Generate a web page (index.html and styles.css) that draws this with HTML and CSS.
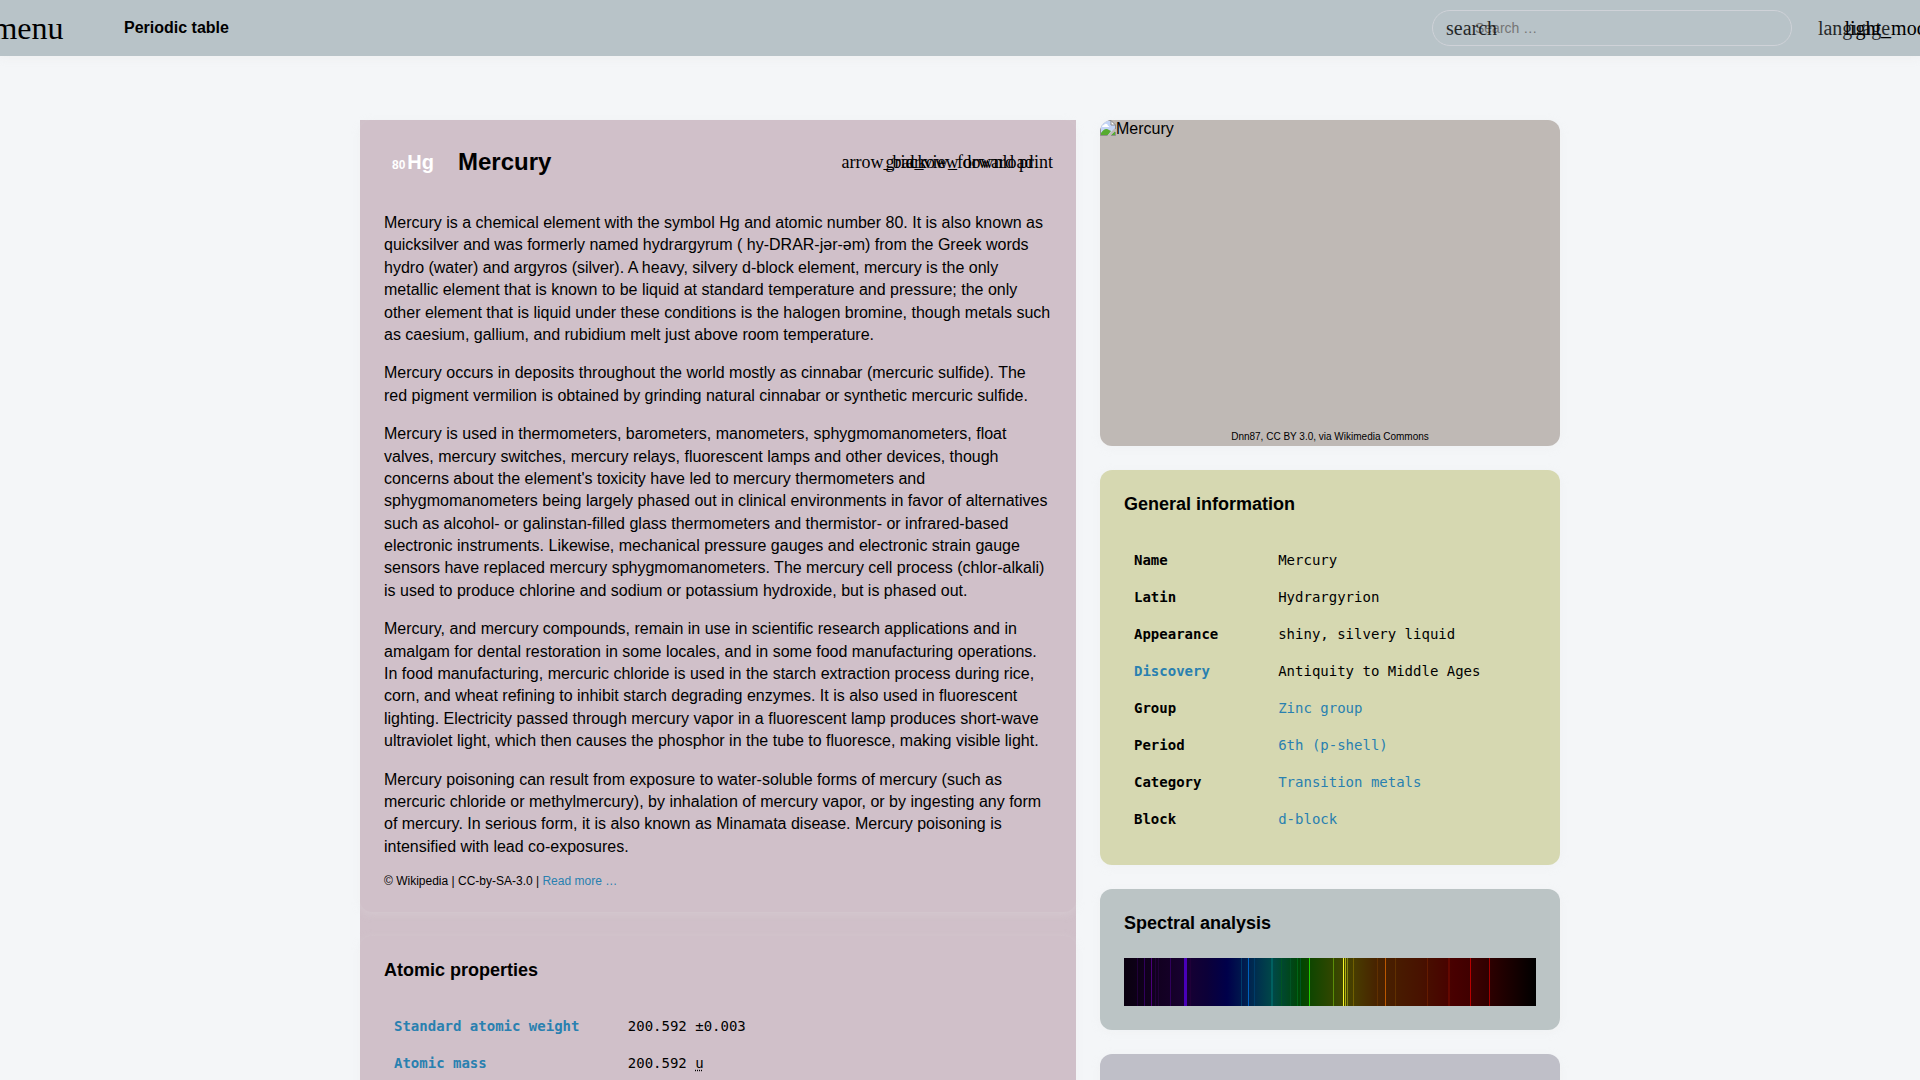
FILE: index.html
```html
<!DOCTYPE html>
<html lang="en">
<head>
<meta charset="utf-8">
<meta name="viewport" content="width=device-width, initial-scale=1">
<title>Mercury - Periodic table</title>
<link rel="stylesheet" href="styles.css">
</head>
<body>
<header class="topbar">
  <button class="icon-btn icon-btn-menu" type="button">menu</button>
  <a class="brand" href="#">Periodic table</a>
  <form class="search">
    <label class="search-icon" for="q">search</label>
    <input class="search-input" id="q" type="search" placeholder="Search …">
  </form>
  <div class="topbar-actions">
    <button class="icon-btn icon-btn-soft" type="button">language</button>
    <button class="icon-btn" type="button">light_mode</button>
  </div>
</header>

<main class="layout">
  <article class="column">
    <section class="panel">
      <div class="panel-head">
        <span class="symbol"><small class="number">80</small>Hg</span>
        <h1 class="title">Mercury</h1>
        <nav class="tools">
          <a class="tool" href="#prev">arrow_back</a>
          <a class="tool" href="#table">grid_view</a>
          <a class="tool" href="#next">arrow_forward</a>
          <a class="tool" href="#download">download</a>
          <a class="tool" href="#print">print</a>
        </nav>
      </div>
      <div class="prose">
        <p>Mercury is a chemical element with the symbol Hg and atomic number 80. It is also known as quicksilver and was formerly named hydrargyrum ( hy-DRAR-jər-əm) from the Greek words hydro (water) and argyros (silver). A heavy, silvery d-block element, mercury is the only metallic element that is known to be liquid at standard temperature and pressure; the only other element that is liquid under these conditions is the halogen bromine, though metals such as caesium, gallium, and rubidium melt just above room temperature.</p>
        <p>Mercury occurs in deposits throughout the world mostly as cinnabar (mercuric sulfide). The red pigment vermilion is obtained by grinding natural cinnabar or synthetic mercuric sulfide.</p>
        <p>Mercury is used in thermometers, barometers, manometers, sphygmomanometers, float valves, mercury switches, mercury relays, fluorescent lamps and other devices, though concerns about the element's toxicity have led to mercury thermometers and sphygmomanometers being largely phased out in clinical environments in favor of alternatives such as alcohol- or galinstan-filled glass thermometers and thermistor- or infrared-based electronic instruments. Likewise, mechanical pressure gauges and electronic strain gauge sensors have replaced mercury sphygmomanometers. The mercury cell process (chlor-alkali) is used to produce chlorine and sodium or potassium hydroxide, but is phased out.</p>
        <p>Mercury, and mercury compounds, remain in use in scientific research applications and in amalgam for dental restoration in some locales, and in some food manufacturing operations. In food manufacturing, mercuric chloride is used in the starch extraction process during rice, corn, and wheat refining to inhibit starch degrading enzymes. It is also used in fluorescent lighting. Electricity passed through mercury vapor in a fluorescent lamp produces short-wave ultraviolet light, which then causes the phosphor in the tube to fluoresce, making visible light.</p>
        <p>Mercury poisoning can result from exposure to water-soluble forms of mercury (such as mercuric chloride or methylmercury), by inhalation of mercury vapor, or by ingesting any form of mercury. In serious form, it is also known as Minamata disease. Mercury poisoning is intensified with lead co-exposures.</p>
        <p class="source">© Wikipedia | CC-by-SA-3.0 | <a class="link" href="#wikipedia">Read more …</a></p>
      </div>
    </section>

    <section class="panel">
      <h2 class="heading">Atomic properties</h2>
      <table class="facts">
        <tr><th scope="row"><a class="link" href="#weight">Standard atomic weight</a></th><td>200.592 ±0.003</td></tr>
        <tr><th scope="row"><a class="link" href="#mass">Atomic mass</a></th><td>200.592 <abbr class="unit">u</abbr></td></tr>
      </table>
    </section>
  </article>

  <aside class="side">
    <figure class="card photo">
      <div class="photo-alt">
        <svg class="photo-icon" viewBox="0 0 16 16" aria-hidden="true">
          <path d="M1 1h10l4 4v10H1z" fill="#c3d4f5"/>
          <path d="M2 7q0-2 2-2 1-2 3-1 1 1 1 2 2 0 1 1z" fill="#fff"/>
          <path d="M1 15v-2q4-6 8-3l2 1-3 4z" fill="#56ab2f"/>
          <path d="M11 15l4-4v4z" fill="#56ab2f"/>
          <path d="M15 8l-7 7h3l4-4z" fill="#bfb9b5"/>
          <path d="M11 1v4h4z" fill="#fff"/>
          <path d="M.5 15.5V.5H11L15.5 5v4M11 .5V5h4.5M.5 15.5h7M11 15.5h4.5V12" fill="none" stroke="#8d8d8d"/>
        </svg>
        <span>Mercury</span>
      </div>
      <figcaption class="credit">Dnn87, CC BY 3.0, via Wikimedia Commons</figcaption>
    </figure>

    <section class="card card-general">
      <h2 class="heading">General information</h2>
      <table class="facts">
        <tr><th scope="row">Name</th><td>Mercury</td></tr>
        <tr><th scope="row">Latin</th><td>Hydrargyrion</td></tr>
        <tr><th scope="row">Appearance</th><td>shiny, silvery liquid</td></tr>
        <tr><th scope="row"><a class="link" href="#discovery">Discovery</a></th><td>Antiquity to Middle Ages</td></tr>
        <tr><th scope="row">Group</th><td><a class="link" href="#group">Zinc group</a></td></tr>
        <tr><th scope="row">Period</th><td><a class="link" href="#period">6th (p-shell)</a></td></tr>
        <tr><th scope="row">Category</th><td><a class="link" href="#category">Transition metals</a></td></tr>
        <tr><th scope="row">Block</th><td><a class="link" href="#block">d-block</a></td></tr>
      </table>
    </section>

    <section class="card card-spectrum">
      <h2 class="heading">Spectral analysis</h2>
      <svg class="spectrum" viewBox="0 0 412 48" preserveAspectRatio="none" shape-rendering="crispEdges" role="img" aria-label="Emission spectrum">
        <defs>
          <linearGradient id="band" gradientUnits="userSpaceOnUse" x1="0" y1="0" x2="412" y2="0">
            <stop offset="0" stop-color="#0a0010"/>
            <stop offset=".11" stop-color="#140026"/>
            <stop offset=".15" stop-color="#180032"/>
            <stop offset=".2" stop-color="#0c0038"/>
            <stop offset=".25" stop-color="#00004a"/>
            <stop offset=".31" stop-color="#002850"/>
            <stop offset=".36" stop-color="#004848"/>
            <stop offset=".43" stop-color="#004600"/>
            <stop offset=".46" stop-color="#144600"/>
            <stop offset=".53" stop-color="#404600"/>
            <stop offset=".56" stop-color="#483c00"/>
            <stop offset=".61" stop-color="#482400"/>
            <stop offset=".72" stop-color="#481200"/>
            <stop offset=".8" stop-color="#480000"/>
            <stop offset=".84" stop-color="#400000"/>
            <stop offset=".9" stop-color="#280000"/>
            <stop offset="1" stop-color="#000"/>
          </linearGradient>
        </defs>
        <rect width="412" height="48" fill="url(#band)"/>
        <path d="M13 0h1v48h-1zM31 0h1v48h-1zM34 0h1v48h-1zM66 0h1v48h-1z" fill="#200038"/>
        <path d="M20 0h1v48h-1zM46 0h1v48h-1z" fill="#30005c"/>
        <path d="M27 0h1v48h-1z" fill="#4c007c"/>
        <path d="M60 0h3v48h-3z" fill="#4800b8"/>
        <path d="M117 0h1v48h-1zM130 0h1v48h-1z" fill="#003c68"/>
        <path d="M124 0h1v48h-1z" fill="#0060c0"/>
        <path d="M147 0h2v48h-2z" fill="#006060"/>
        <path d="M157 0h1v48h-1zM166 0h1v48h-1zM176 0h1v48h-1z" fill="#005424"/>
        <path d="M173 0h1v48h-1z" fill="#006418"/>
        <path d="M185 0h1v48h-1z" fill="#20d000"/>
        <path d="M209 0h1v48h-1z" fill="#5c8c08"/>
        <path d="M219 0h1v48h-1z" fill="#f8f828"/>
        <path d="M221 0h1v48h-1z" fill="#b0b010"/>
        <path d="M223 0h1v48h-1z" fill="#848410"/>
        <path d="M229 0h1v48h-1z" fill="#706000"/>
        <path d="M253 0h1v48h-1zM271 0h1v48h-1z" fill="#603000"/>
        <path d="M261 0h1v48h-1z" fill="#bc5800"/>
        <path d="M303 0h1v48h-1z" fill="#641c00"/>
        <path d="M324 0h2v48h-2z" fill="#640800"/>
        <path d="M346 0h1v48h-1z" fill="#b80000"/>
        <path d="M365 0h1v48h-1z" fill="#a40000"/>
      </svg>
    </section>

    <section class="card card-more"></section>
  </aside>
</main>
</body>
</html>
```
FILE: styles.css
```css
* {
  box-sizing: border-box;
}

body {
  margin: 0;
  overflow-x: hidden;
  background: #f4f6f8;
  color: #000;
  font: 16px/1.4 "Liberation Sans", Arial, sans-serif;
}

h1,
h2,
p,
figure {
  margin: 0;
}

.link {
  color: #2980b0;
  text-decoration: none;
}

/* Top bar */
.topbar {
  display: flex;
  align-items: center;
  height: 56px;
  padding-right: 12px;
  background: #b8c3c8;
  box-shadow: 0 2px 8px #e8e8e870;
}

.icon-btn {
  display: flex;
  align-items: center;
  justify-content: center;
  flex: none;
  width: 36px;
  height: 36px;
  padding: 0;
  border: 0;
  background: none;
  color: #000;
  font: 20px/20px "Liberation Serif", serif;
  white-space: nowrap;
}

.icon-btn-menu {
  width: 56px;
  font-size: 32px;
}

.icon-btn-soft {
  opacity: 0.8;
}

.brand {
  margin-left: 68px;
  color: #000;
  font-weight: bold;
  text-decoration: none;
}

.search {
  display: flex;
  align-items: center;
  width: 360px;
  height: 36px;
  margin-left: auto;
  padding: 0 13px;
  border: 1px solid #cfd2d8;
  border-radius: 18px;
}

.search-icon {
  flex: none;
  width: 29px;
  font: 20px/20px "Liberation Serif", serif;
  opacity: 0.8;
}

.search-input {
  flex: 1;
  min-width: 0;
  padding: 0;
  border: 0;
  outline: 0;
  background: none;
  font: 14px/20px "Liberation Sans", Arial, sans-serif;
}

.search-input::placeholder {
  color: #757575;
}

.topbar-actions {
  display: flex;
  margin-left: 44px;
}

/* Page grid */
.layout {
  display: grid;
  grid-template-columns: 716fr 460fr;
  gap: 24px;
  max-width: 1248px;
  margin: 0 auto;
  padding: 64px 24px;
}

.column {
  display: flex;
  flex-direction: column;
  gap: 24px;
  background: #d0c0c9;
}

.side {
  display: flex;
  flex-direction: column;
  gap: 24px;
}

.panel,
.card {
  padding: 24px;
  border-radius: 12px;
  box-shadow: 0 2px 8px #e8e8e840;
}

.panel {
  background: #d0c0c9;
}

/* Article head */
.panel-head {
  display: flex;
  align-items: center;
  gap: 16px;
  height: 36px;
  margin-bottom: 32px;
}

.symbol {
  display: flex;
  align-items: baseline;
  gap: 2px;
  padding: 0 8px;
  color: #fff;
  font-size: 20px;
  font-weight: bold;
}

.number {
  font-size: 12px;
}

.title {
  font-size: 24px;
}

.tools {
  display: flex;
  gap: 6px;
  margin-left: auto;
}

.tool {
  display: flex;
  justify-content: center;
  width: 32px;
  color: #000;
  font: 18px/20px "Liberation Serif", serif;
  text-decoration: none;
  white-space: nowrap;
}

.prose {
  display: flex;
  flex-direction: column;
  gap: 16px;
}

.source {
  font-size: 12px;
  line-height: 14px;
}

/* Fact tables */
.heading {
  margin-bottom: 24px;
  font-size: 18px;
  line-height: 21px;
}

.facts {
  width: 100%;
  margin: 27px 0 3px;
  border-collapse: collapse;
  table-layout: fixed;
  font: 14px/21px "DejaVu Sans Mono", monospace;
}

.facts th,
.facts td {
  padding: 8px 10px;
  text-align: left;
}

.facts th {
  width: 35%;
}

.unit {
  text-decoration: underline dotted;
  text-underline-offset: 2px;
}

/* Side cards */
.photo {
  display: flex;
  flex-direction: column;
  min-height: 326px;
  padding: 0;
  overflow: hidden;
  background: #bfb9b5;
}

.photo-alt {
  display: flex;
  flex: 1;
  line-height: 18px;
}

.photo-icon {
  width: 16px;
  height: 16px;
}

.credit {
  padding: 2px 8px 1px;
  font-size: 10px;
  line-height: 16px;
  text-align: center;
}

.card-general {
  background: #d6d8b1;
}

.card-spectrum {
  background: #bbc4c5;
}

.card-more {
  min-height: 120px;
  background: #bfbfc8;
}

.spectrum {
  display: block;
  width: 100%;
  height: 48px;
}

@media (max-width: 900px) {
  .layout {
    grid-template-columns: 1fr;
  }

  .search {
    width: auto;
  }
}
```
